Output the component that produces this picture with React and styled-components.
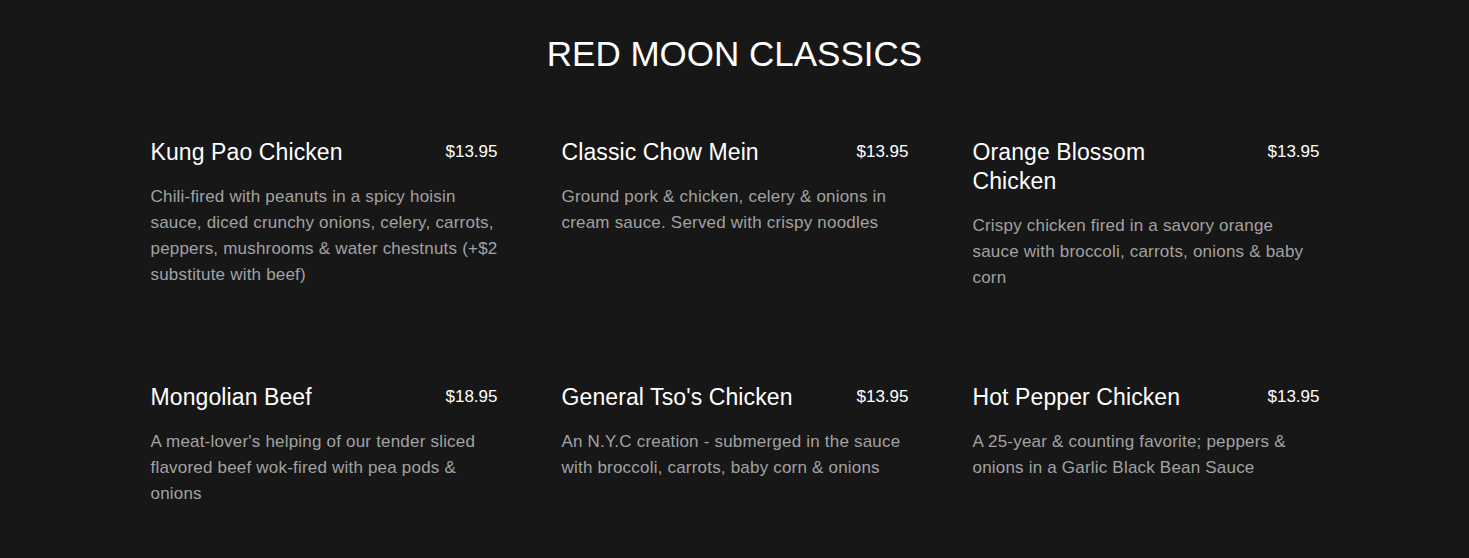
import React from "react";
import styled, { createGlobalStyle } from "styled-components";

const GlobalStyle = createGlobalStyle`
  html, body {
    margin: 0;
    padding: 0;
    background: #171717;
  }
  body {
    font-family: "Liberation Sans", Arial, sans-serif;
    color: #fff;
  }
`;

const Section = styled.section`
  min-height: 100vh;
  box-sizing: border-box;
  padding: 34px 0 40px;
  background: #171717;
`;

const Title = styled.h2`
  margin: 0;
  text-align: center;
  font-size: 35px;
  font-weight: 400;
  line-height: 40px;
  color: #fff;
`;

const Grid = styled.div`
  width: 1169px;
  margin: 64px auto 0;
  padding-left: 1px;
  display: grid;
  grid-template-columns: repeat(3, 347px);
  column-gap: 64px;
  row-gap: 92px;
`;

const Item = styled.div`
  display: flex;
  flex-direction: column;
`;

const ItemHead = styled.div`
  display: flex;
  justify-content: space-between;
  align-items: flex-start;
`;

const ItemName = styled.h3`
  margin: 0;
  max-width: 70%;
  font-size: 23px;
  font-weight: 400;
  line-height: 29px;
  letter-spacing: 0.1px;
  color: #fff;
`;

const Price = styled.span`
  margin-top: 4px;
  font-size: 17px;
  line-height: 20px;
  color: #fff;
`;

const Description = styled.p`
  margin: 17px 0 0;
  font-size: 17px;
  line-height: 26px;
  letter-spacing: 0.2px;
  color: #a2a2a2;
`;

const items = [
  {
    name: "Kung Pao Chicken",
    price: "$13.95",
    desc: "Chili-fired with peanuts in a spicy hoisin sauce, diced crunchy onions, celery, carrots, peppers, mushrooms & water chestnuts (+$2 substitute with beef)",
  },
  {
    name: "Classic Chow Mein",
    price: "$13.95",
    desc: "Ground pork & chicken, celery & onions in cream sauce. Served with crispy noodles",
  },
  {
    name: "Orange Blossom Chicken",
    price: "$13.95",
    desc: "Crispy chicken fired in a savory orange sauce with broccoli, carrots, onions & baby corn",
  },
  {
    name: "Mongolian Beef",
    price: "$18.95",
    desc: "A meat-lover's helping of our tender sliced flavored beef wok-fired with pea pods & onions",
  },
  {
    name: "General Tso's Chicken",
    price: "$13.95",
    desc: "An N.Y.C creation - submerged in the sauce with broccoli, carrots, baby corn & onions",
  },
  {
    name: "Hot Pepper Chicken",
    price: "$13.95",
    desc: "A 25-year & counting favorite; peppers & onions in a Garlic Black Bean Sauce",
  },
];

const App = () => {
  return (
    <>
      <GlobalStyle />
      <Section>
        <Title>RED MOON CLASSICS</Title>
        <Grid>
          {items.map((item) => (
            <Item key={item.name}>
              <ItemHead>
                <ItemName>{item.name}</ItemName>
                <Price>{item.price}</Price>
              </ItemHead>
              <Description>{item.desc}</Description>
            </Item>
          ))}
        </Grid>
      </Section>
    </>
  );
};

export default App;
